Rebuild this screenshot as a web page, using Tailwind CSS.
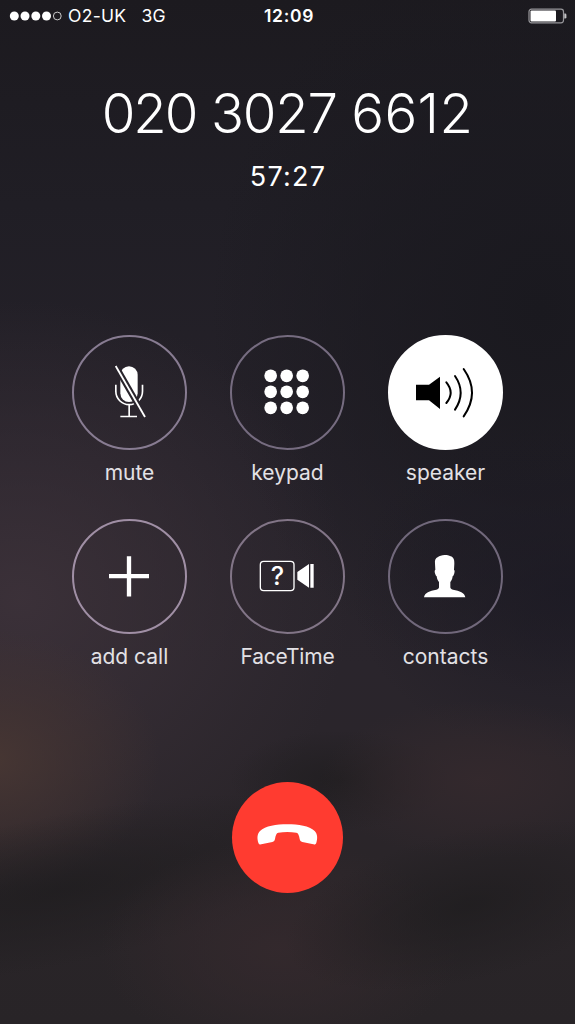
<!DOCTYPE html>
<html lang="en">
<head>
  <meta charset="UTF-8">
  <meta name="viewport" content="width=device-width, initial-scale=1.0">
  <title>Call</title>
  <script src="https://cdn.jsdelivr.net/npm/@tailwindcss/browser@4"></script>
</head>
<body class="relative w-[575px] h-[1024px] overflow-hidden bg-[#232025] text-white font-['Inter','Liberation_Sans',sans-serif] leading-none select-none">
  <!-- Blurred wallpaper -->
  <svg class="absolute inset-0 w-full h-full" viewBox="0 0 575 1024" preserveAspectRatio="none" aria-hidden="true">
    <defs>
      <linearGradient id="base" x1="0" y1="0" x2="0" y2="1">
        <stop offset="0" stop-color="#1c1a1f" />
        <stop offset=".2" stop-color="#201e25" />
        <stop offset=".45" stop-color="#26222a" />
        <stop offset=".65" stop-color="#2a252c" />
        <stop offset=".85" stop-color="#2a2529" />
        <stop offset="1" stop-color="#282427" />
      </linearGradient>
      <radialGradient id="night"><stop offset="0" stop-color="#1a191f" /><stop offset=".5" stop-color="#1a191f" stop-opacity=".6" /><stop offset="1" stop-color="#1a191f" stop-opacity="0" /></radialGradient>
      <radialGradient id="navy"><stop offset="0" stop-color="#1c1a24" stop-opacity=".8" /><stop offset=".5" stop-color="#1c1a24" stop-opacity=".4" /><stop offset="1" stop-color="#1c1a24" stop-opacity="0" /></radialGradient>
      <radialGradient id="plum"><stop offset="0" stop-color="#3d323a" stop-opacity=".9" /><stop offset=".5" stop-color="#3d323a" stop-opacity=".45" /><stop offset="1" stop-color="#3d323a" stop-opacity="0" /></radialGradient>
      <radialGradient id="amber"><stop offset="0" stop-color="#483733" stop-opacity=".95" /><stop offset=".5" stop-color="#463532" stop-opacity=".5" /><stop offset="1" stop-color="#463532" stop-opacity="0" /></radialGradient>
      <radialGradient id="shade"><stop offset="0" stop-color="#1f1d1f" stop-opacity=".8" /><stop offset=".5" stop-color="#1f1d1f" stop-opacity=".4" /><stop offset="1" stop-color="#1f1d1f" stop-opacity="0" /></radialGradient>
      <radialGradient id="rose"><stop offset="0" stop-color="#34292d" stop-opacity=".9" /><stop offset=".5" stop-color="#34292d" stop-opacity=".5" /><stop offset="1" stop-color="#34292d" stop-opacity="0" /></radialGradient>
    </defs>
    <rect width="575" height="1024" fill="url(#base)" />
    <ellipse cx="540" cy="310" rx="330" ry="380" fill="url(#night)" />
    <ellipse cx="570" cy="590" rx="220" ry="170" fill="url(#navy)" />
    <ellipse cx="20" cy="600" rx="330" ry="300" fill="url(#plum)" />
    <ellipse cx="-10" cy="760" rx="170" ry="130" fill="url(#amber)" />
    <ellipse cx="60" cy="890" rx="300" ry="75" fill="url(#shade)" transform="rotate(-12 60 890)" />
    <ellipse cx="340" cy="780" rx="110" ry="50" fill="url(#shade)" />
    <ellipse cx="480" cy="780" rx="160" ry="80" fill="url(#rose)" />
    <ellipse cx="280" cy="950" rx="180" ry="110" fill="url(#rose)" />
    <ellipse cx="470" cy="905" rx="190" ry="75" fill="url(#shade)" transform="rotate(-14 470 905)" />
  </svg>

  <div class="relative w-full h-full flex flex-col items-center">
    <header class="w-full h-8 grid grid-cols-[1fr_auto_1fr] items-center pl-[9px] pr-2 text-[17.5px]">
      <div class="flex items-center">
        <svg class="w-[54px] h-[10px]" viewBox="0 0 54 10">
          <g fill="#fff">
            <circle cx="5.3" cy="5" r="4.5" />
            <circle cx="16" cy="5" r="4.5" />
            <circle cx="26.8" cy="5" r="4.5" />
            <circle cx="37.5" cy="5" r="4.5" />
          </g>
          <circle cx="48.3" cy="5" r="3.9" fill="none" stroke="#ddd" stroke-width=".9" />
        </svg>
        <span class="ml-[5px] tracking-[0.3px]">O2-UK</span>
        <span class="ml-[15px] tracking-[0.3px]">3G</span>
      </div>
      <span class="pl-[2px] font-semibold tracking-[0.7px]">12:09</span>
      <svg class="w-[39px] h-4 justify-self-end" viewBox="0 0 39 16">
        <rect x="1" y="1.2" width="34.5" height="13.6" rx="2.5" fill="none" stroke="#98979b" stroke-width="1.2" />
        <rect x="2.5" y="2.5" width="25.5" height="11" rx="1" fill="#fff" />
        <path d="M36.3 5.5h.8a1.3 1.3 0 0 1 1.3 1.3v2.4a1.3 1.3 0 0 1-1.3 1.3h-.8z" fill="#c4c3c6" />
      </svg>
    </header>

    <h1 class="mt-[54px] text-[54.5px] font-light tracking-[-0.9px]"><span class="tracking-[-2px]">020</span> <span class="tracking-[-1.2px]">3027</span> <span class="tracking-[0.4px]">6612</span></h1>
    <p class="mt-[22px] pl-px text-[27px] tracking-[1.2px]">57:27</p>

    <main class="mt-[145px] grid grid-cols-[115px_115px_115px] gap-x-[43px] text-[21px] text-[#e3e1e5]">
      <button class="h-[184px] flex flex-col items-center">
        <svg class="w-[115px] h-[115px] shrink-0 rounded-full border-2 border-[#887c92]" viewBox="6 6 333 333">
          <mask id="slash">
            <rect width="345" height="345" fill="#fff" />
            <path d="M126 84.300L224 254.700" stroke="#000" stroke-width="18" />
          </mask>
          <g mask="url(#slash)">
            <rect x="145" y="94" width="52" height="107" rx="26" fill="#fff" />
            <path d="M131.500 149v20a40 40 0 0 0 80 0v-20M171.500 210v34M145 244.500h50" fill="none" stroke="#fff" stroke-width="5" />
          </g>
          <path d="M131 93L219 246" stroke="#fff" stroke-width="5.500" />
        </svg>
        <span class="mt-[12px]">mute</span>
      </button>
      <button class="h-[184px] flex flex-col items-center">
        <svg class="w-[115px] h-[115px] shrink-0 rounded-full border-2 border-[#766c80]" viewBox="6 6 333 333" fill="#fff">
          <circle cx="122" cy="122.500" r="19" /><circle cx="170" cy="122.500" r="19" /><circle cx="218" cy="122.500" r="19" />
          <circle cx="122" cy="170.500" r="19" /><circle cx="170" cy="170.500" r="19" /><circle cx="218" cy="170.500" r="19" />
          <circle cx="122" cy="218.500" r="19" /><circle cx="170" cy="218.500" r="19" /><circle cx="218" cy="218.500" r="19" />
        </svg>
        <span class="mt-[12px]">keypad</span>
      </button>
      <button class="h-[184px] flex flex-col items-center">
        <svg class="w-[115px] h-[115px] shrink-0 rounded-full border-2 border-white bg-white" viewBox="6 6 333 333">
          <path d="M84 149h39l33-24v97l-33-26H84z" />
          <g fill="none" stroke="#000" stroke-width="6" stroke-linecap="round">
            <path d="M175 142q26 31 0 62" />
            <path d="M201 123q34 50 0 101" />
            <path d="M227 102q50 71 0 142" />
          </g>
        </svg>
        <span class="mt-[12px]">speaker</span>
      </button>
      <button class="h-[184px] flex flex-col items-center">
        <svg class="w-[115px] h-[115px] shrink-0 rounded-full border-2 border-[#a08fa5]" viewBox="6 6 333 333">
          <path d="M111 171.500h120M171 111.500v121" stroke="#fff" stroke-width="13" />
        </svg>
        <span class="mt-[12px]">add call</span>
      </button>
      <button class="h-[184px] flex flex-col items-center">
        <svg class="w-[115px] h-[115px] shrink-0 rounded-full border-2 border-[#827587]" viewBox="6 6 333 333" fill="#fff">
          <rect x="91" y="127" width="101" height="88" rx="10" fill="none" stroke="#fff" stroke-width="4" />
          <text x="142" y="198" font-size="76" font-weight="500" text-anchor="middle">?</text>
          <path d="M202 159l35-24v71l-35-24zM241 135h10v71h-10z" />
        </svg>
        <span class="mt-[12px] tracking-[-0.2px]">FaceTime</span>
      </button>
      <button class="h-[184px] flex flex-col items-center">
        <svg class="w-[115px] h-[115px] shrink-0 rounded-full border-2 border-[#71687b]" viewBox="6 6 333 333" fill="#fff">
          <path d="M170 108c-9 0-16 3-20 6-8 3-10 10-9 20l1 18c-3 1-2 9 0 14 1 4 3 5 4 6 1 9 4 13 7 17v15c0 4-2 6-8 8-20 4-35 8-37 23h124c-2-15-17-19-37-23-6-2-8-4-8-8v-15c3-4 6-8 7-17 1-1 3-2 4-6 2-5 3-13 0-14l1-18c1-14-4-20-11-22-5-3-11-4-18-4z" />
        </svg>
        <span class="mt-[12px]">contacts</span>
      </button>
    </main>

    <button class="mt-[79px] w-[111px] h-[111px] shrink-0 rounded-full bg-[#ff3b30]">
      <svg class="w-full h-full" viewBox="0 0 333 333" fill="#fff">
        <path d="M166 127c-33 0-66 5-82 20-9 9-9 23-5 35 1 4 4 6 9 5l33-7c5-1 7-4 8-9 2-11 4-18 10-19 17-3 37-3 54 0 6 1 8 8 10 19 1 5 3 8 8 9l33 7c5 1 8-1 9-5 4-12 4-26-5-35-16-15-49-20-82-20z" />
      </svg>
    </button>
  </div>
</body>
</html>
